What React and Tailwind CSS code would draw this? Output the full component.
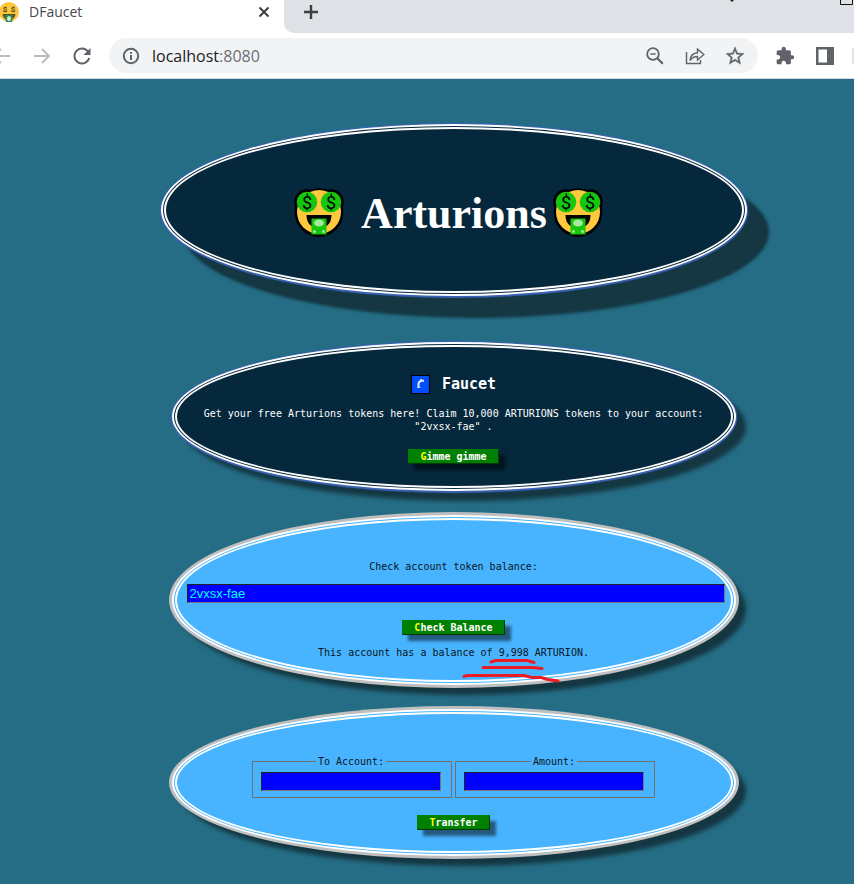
import React from "react";

function MoneyFace() {
  return (
    <svg viewBox="0 0 50 50" className="h-[50px] w-[50px] shrink-0" aria-hidden="true">
      <circle cx="25" cy="25.500" r="24.300" fill="#000" />
      <circle cx="13" cy="15" r="12.800" fill="#000" />
      <circle cx="37" cy="15" r="12.800" fill="#000" />
      <circle cx="25" cy="25" r="22" fill="#ffc83d" />
      <circle cx="13" cy="15" r="10.300" fill="#16c60c" />
      <circle cx="37" cy="15" r="10.300" fill="#16c60c" />
      <g fill="#000" fontFamily="Roboto, sans-serif" fontWeight="400" fontSize="18" textAnchor="middle">
        <text x="13" y="21.500">$</text>
        <text x="37" y="21.500">$</text>
      </g>
      <path d="M12.500 28H37.500C37.500 36 33 41 25 41S12.500 36 12.500 28Z" fill="#000" />
      <rect x="17.500" y="31.500" width="15" height="16" fill="#16c60c" />
      <ellipse cx="25" cy="36" rx="5" ry="3.500" fill="#a5e8a0" />
      <circle cx="20.500" cy="44.500" r="1.500" fill="#a5e8a0" />
      <circle cx="29.500" cy="44.500" r="1.500" fill="#a5e8a0" />
    </svg>
  );
}

function Favicon() {
  return (
    <svg viewBox="0 0 20 22" className="h-[22px] w-5 shrink-0" aria-hidden="true">
      <circle cx="9" cy="11" r="10" fill="#fcc83a" />
      <g fill="#4e4322" fontFamily="Roboto, sans-serif" fontWeight="bold" fontSize="8" textAnchor="middle">
        <text x="5" y="11">$</text>
        <text x="13" y="11">$</text>
      </g>
      <path d="M2.500 13H15.500C15 17 12 19 9 19S3 17 2.500 13Z" fill="#5b4b20" />
      <path d="M5 14H13L12 21H6Z" fill="#2e8b57" />
      <ellipse cx="9" cy="17.500" rx="2" ry="2.500" fill="#d5eedb" />
    </svg>
  );
}

function FaucetIcon() {
  return (
    <svg viewBox="0 0 19 19" className="h-[19px] w-[19px]" aria-hidden="true">
      <rect width="19" height="19" fill="#000" />
      <rect x="1" y="1" width="17" height="17" fill="#0050ff" />
      <path d="M7.500 13V9Q7.500 5.800 12.500 5.500" fill="none" stroke="#eaf3ff" strokeWidth="2" />
      <path d="M9 4.500H11M6 12.500H9.500M12.500 5V7" fill="none" stroke="#bcd5ff" strokeWidth="1" />
    </svg>
  );
}

const chromeButton = "flex h-6 w-6 shrink-0 items-center justify-center text-[#5f6368]";

function BrowserChrome() {
  return (
    <header className="font-['Open_Sans',sans-serif]">
      <div className="flex h-[33px] bg-white">
        <div className="flex h-6 w-[284px] shrink-0 items-center pr-2">
          <Favicon />
          <span className="ml-[9px] flex-1 text-[14px] leading-6 text-[#45494d]">DFaucet</span>
          <button aria-label="Close tab" className="flex h-6 w-6 items-center justify-center">
            <svg viewBox="0 0 12 12" className="h-3 w-3" fill="none" stroke="#3c4043" strokeWidth="2"><path d="M1.500 1.500 10.500 10.500M10.500 1.500 1.500 10.500" /></svg>
          </button>
        </div>
        <div className="flex flex-1 justify-between rounded-bl-[10px] bg-[#dee1e6] pl-[15px]">
          <button aria-label="New tab" className="flex h-6 w-6 items-center justify-center">
            <svg viewBox="0 0 16 16" className="h-4 w-4" fill="none" stroke="#3c4043" strokeWidth="2.400"><path d="M8 1V15M1 8H15" /></svg>
          </button>
          <svg viewBox="0 0 130 5" className="h-[5px] w-[130px]" fill="none" stroke="#111" aria-hidden="true">
            <path d="M6 -1 8 1.200 10 -1" strokeWidth="1.200" />
            <path d="M116.500 -1V4.500H128.500V-1" />
          </svg>
        </div>
      </div>
      <div className="flex h-[46px] items-center border-b border-[#d5d8dc] bg-white">
        <button aria-label="Back" className="flex h-6 w-[22px] shrink-0 items-center">
          <svg viewBox="0 0 10 16" className="h-4 w-[10px]" fill="none" stroke="#b9bbbe" strokeWidth="1.800"><path d="M0 8H10M-6 8 1 1M-6 8 1 15" /></svg>
        </button>
        <button aria-label="Forward" className="ml-2 flex h-6 w-6 shrink-0 items-center justify-center">
          <svg viewBox="0 0 18 16" className="h-4 w-[18px]" fill="none" stroke="#b9bbbe" strokeWidth="1.800"><path d="M1 8H16M9 1 16 8 9 15" /></svg>
        </button>
        <button aria-label="Reload" className={`ml-4 ${chromeButton}`}>
          <svg viewBox="0 0 18 18" className="h-[18px] w-[18px]" fill="none" stroke="currentColor" strokeWidth="2"><path d="M15 4.500A7.500 7.500 0 1 0 16.200 11" /><path d="M17.500 1V8H10.500Z" fill="currentColor" stroke="none" /></svg>
        </button>
        <div className="ml-[15px] flex h-[35px] min-w-0 flex-1 items-center rounded-full bg-[#f1f3f4] pr-[11px] pl-[10px]">
          <svg viewBox="0 0 24 24" className="h-6 w-6 shrink-0" fill="none" stroke="#5f6368" strokeWidth="2" aria-hidden="true"><circle cx="12" cy="12" r="7.200" /><path d="M12 11V16M12 8V9.800" /></svg>
          <span className="ml-[9px] flex-1 text-[16px] leading-6 text-[#202124]">localhost<span className="text-[#6b6f74]">:8080</span></span>
          <div className="flex gap-4">
            <button aria-label="Zoom" className={chromeButton}>
              <svg viewBox="0 0 18 18" className="h-[18px] w-[18px]" fill="none" stroke="currentColor" strokeWidth="1.800"><circle cx="7" cy="7" r="5.800" /><path d="M11.300 11.300 16.800 16.800" strokeWidth="2.200" /><path d="M4.300 7H9.700" strokeWidth="1.400" /></svg>
            </button>
            <button aria-label="Share" className={chromeButton}>
              <svg viewBox="0 0 20 18" className="h-[18px] w-5" fill="none" stroke="currentColor" strokeWidth="1.400"><path d="M1.500 5V16.500H15.500V13" /><path d="M5 13.500C5.500 8.500 8.500 6 12.500 5.800V2L18.800 7.500 12.500 13V9.500C9 9.500 7 10.500 5 13.500Z" /></svg>
            </button>
            <button aria-label="Bookmark" className={chromeButton}>
              <svg viewBox="0 0 24 24" className="h-[22px] w-[22px]" fill="currentColor" stroke="currentColor" strokeWidth="0.400"><path d="m22 9.240-7.190-.62L12 2 9.190 8.630 2 9.240l5.460 4.730L5.820 21 12 17.270 18.180 21l-1.630-7.030L22 9.240zM12 15.400l-3.760 2.270 1-4.280-3.320-2.880 4.380-.38L12 6.100l1.710 4.040 4.380.38-3.320 2.880 1 4.280L12 15.400z" /></svg>
            </button>
          </div>
        </div>
        <div className="ml-[15px] flex items-center gap-4">
          <button aria-label="Extensions" className={chromeButton}>
            <svg viewBox="0 0 24 24" className="h-5 w-5" fill="currentColor"><path d="M20.500 11H19V7c0-1.100-.9-2-2-2h-4V3.500C13 2.120 11.880 1 10.500 1S8 2.120 8 3.500V5H4c-1.100 0-1.990.9-1.990 2v3.800H3.500c1.490 0 2.700 1.210 2.700 2.700s-1.210 2.700-2.700 2.700H2V20c0 1.100.9 2 2 2h3.800v-1.500c0-1.490 1.210-2.700 2.700-2.700 1.490 0 2.700 1.210 2.700 2.700V22H17c1.100 0 2-.9 2-2v-4h1.500c1.380 0 2.500-1.120 2.500-2.500S21.880 11 20.500 11z" /></svg>
          </button>
          <button aria-label="Side panel" className={chromeButton}>
            <svg viewBox="0 0 18 18" className="h-[18px] w-[18px]"><path d="M0 0H18V18H0ZM2.500 2.500V15.500H11V2.500Z" fill="currentColor" fillRule="evenodd" /></svg>
          </button>
        </div>
        <span className="ml-[15px] h-4 w-[2px] shrink-0 rounded-l-full bg-[#dfe2ea]" />
      </div>
    </header>
  );
}

const darkPanel = "mx-auto w-full rounded-[50%] border-[5px] border-double border-white bg-[#05283c] text-center text-white";
const lightPanel =
  "relative mx-auto mt-6 w-full max-w-[564px] rounded-[50%] border-[5px] border-double border-white bg-[#48b4ff] text-center text-[#0a1420] shadow-[0_0_0_3px_#bfbfbf,9px_9px_4px_1px_#143742]";
const field =
  "block h-[19px] w-full border border-t-[#222] border-r-[#767676] border-b-[#767676] border-l-[#222] bg-[#0000ff] px-[2px] font-['Liberation_Sans',Arial,sans-serif] text-[13px] leading-[17px] text-[#00ffff] outline-none";

function ActionButton({ children, className = "" }) {
  return (
    <button
      type="button"
      className={`mx-auto block h-[15px] border border-t-[#008000] border-r-[#003800] border-b-[#003800] border-l-[#008000] bg-[#008000] px-[11px] text-[10px] leading-[13px] font-bold text-white shadow-[6px_6px_3px_rgba(0,0,0,0.5)] first-letter:text-[#ffff00] ${className}`}
    >
      {children}
    </button>
  );
}

function TransferField({ id, label }) {
  return (
    <fieldset className="w-[200px] border border-[#707070] pt-1 pr-[10px] pb-[6px] pl-2">
      <legend className="mx-auto px-[2px]">
        <label htmlFor={id} className="block">{label}</label>
      </legend>
      <input id={id} type="text" className={field} />
    </fieldset>
  );
}

export default function App() {
  return (
    <div className="flex min-h-screen flex-col overflow-x-hidden bg-[#256d85]">
      <BrowserChrome />
      <main className="flex-1 pt-[45px] pb-7 pl-[53px] font-['DejaVu_Sans_Mono',monospace] text-[10px] leading-[13px]">
        <section className={`${darkPanel} max-w-[586px] pt-[57px] pb-[54px] shadow-[0_0_1px_1px_#3b63b5,0_1px_1px_1px_#3b63b5,22px_22px_3px_#143742]`}>
          <h1 className="flex h-[51px] items-center justify-center pr-[10px] font-['Liberation_Serif','Times_New_Roman',serif] text-[44px] leading-[51px] font-bold">
            <MoneyFace />
            <span className="mr-[6px] ml-[17px] pt-[3px]">Arturions</span>
            <MoneyFace />
          </h1>
        </section>

        <section className={`${darkPanel} mt-[46px] max-w-[564px] pt-[27px] pb-[22px] shadow-[0_0_1px_1px_#3b63b5,0_1px_1px_1px_#3b63b5,10px_10px_4px_#143742]`}>
          <h2 className="flex h-5 items-center justify-center gap-3 text-[15px] leading-5 font-bold">
            <FaucetIcon />
            Faucet
          </h2>
          <p className="mt-[13px]">
            Get your free Arturions tokens here! Claim 10,000 ARTURIONS tokens to your account:
            <br />
            "2vxsx-fae" .
          </p>
          <ActionButton className="mt-4">Gimme gimme</ActionButton>
        </section>

        <section className={`${lightPanel} pt-10 pb-[21px]`}>
          <label htmlFor="account" className="block">Check account token balance:</label>
          <div className="mt-[11px] pr-[6px] pl-[10px]">
            <input id="account" type="text" defaultValue="2vxsx-fae" className={field} />
          </div>
          <ActionButton className="mt-[17px]">Check Balance</ActionButton>
          <p className="mt-[11px]">This account has a balance of 9,998 ARTURION.</p>
          <svg viewBox="0 0 100 26" className="absolute bottom-0 left-1/2 ml-[9px] h-[26px] w-[100px] overflow-visible" fill="none" stroke="#ed1c24" strokeWidth="3" strokeLinecap="round" strokeLinejoin="round" aria-hidden="true">
            <path d="M28 8 33 6.500H64L71 8.500" />
            <path d="M20 13.500H70L79 14.500" />
            <path d="M1 22.500 4 21.500H61L69 23.500H78L85 25.500 95 27" />
          </svg>
        </section>

        <section className={`${lightPanel} pt-[41px] pb-[21px]`}>
          <div className="flex justify-center gap-[3px]">
            <TransferField id="to-account" label="To Account:" />
            <TransferField id="amount" label="Amount:" />
          </div>
          <ActionButton className="mt-[17px]">Transfer</ActionButton>
        </section>
      </main>
    </div>
  );
}
